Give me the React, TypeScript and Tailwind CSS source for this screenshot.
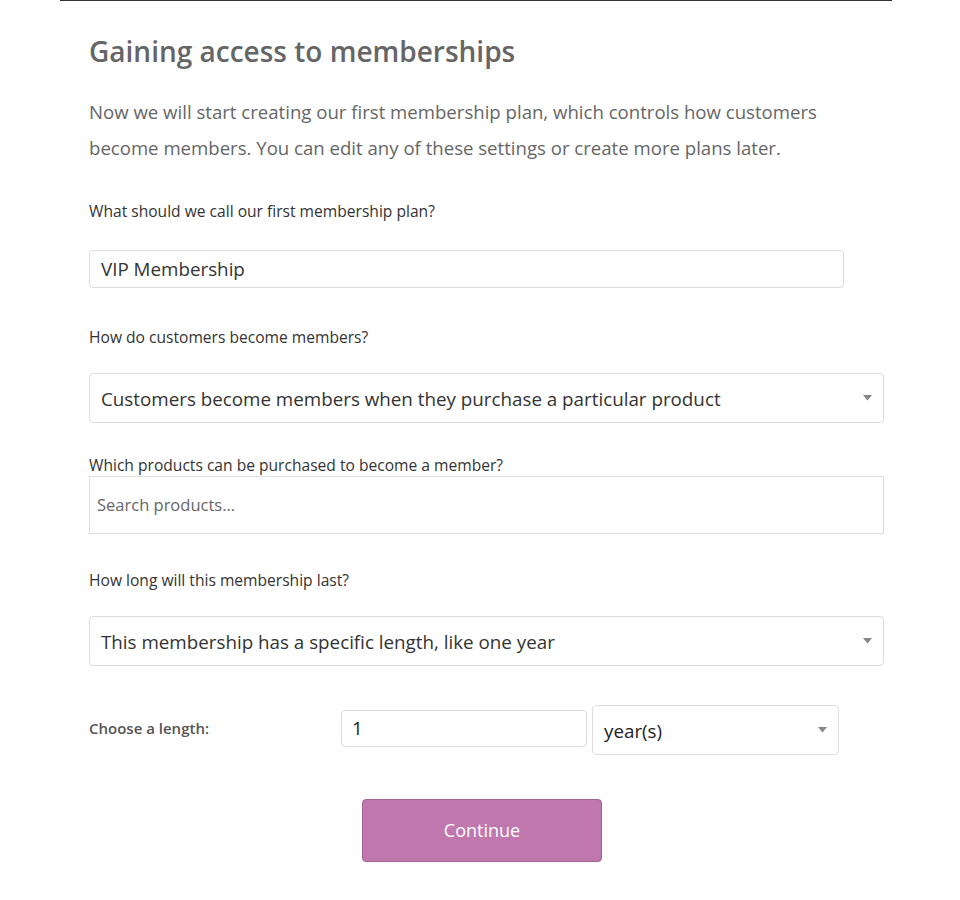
import React from "react";

const Arrow = () => (
  <svg width="9" height="6" viewBox="0 0 9 6" className="shrink-0">
    <path d="M0 0 H9 L4.5 5.5 Z" fill="#888" />
  </svg>
);

export default function App() {
  const font = { fontFamily: '"Open Sans", "Noto Sans", sans-serif' };
  return (
    <div className="bg-white min-h-[900px] w-[960px]" style={font}>
      <div className="ml-[60px] w-[832px] border-t border-[#333] pl-[29px] pr-[8px]">
        <h1 className="text-[28px] font-semibold text-[#666] mt-[30px] leading-[40px]">
          Gaining access to memberships
        </h1>
        <p className="text-[18.6px] text-[#666] leading-[36px] mt-[23px] w-[760px]">
          Now we will start creating our first membership plan, which controls how customers become members. You can edit any of these settings or create more plans later.
        </p>

        <div className="mt-[35px] text-[15.6px] text-[#333] leading-[20px]">What should we call our first membership plan?</div>
        <div className="mt-[29px] w-[755px] h-[38px] border border-[#ddd] rounded-[4px] flex items-center px-[11px] text-[18.8px] text-[#333]">
          <span className="mt-[1px]">VIP Membership</span>
        </div>

        <div className="mt-[39px] text-[15.6px] text-[#333] leading-[20px]">How do customers become members?</div>
        <div className="mt-[26px] w-[795px] h-[50px] border border-[#ddd] rounded-[4px] flex items-center justify-between pl-[11px] pr-[11px] text-[18.8px] text-[#333]">
          <span className="mt-[3px]">Customers become members when they purchase a particular product</span>
          <Arrow />
        </div>

        <div className="mt-[32px] text-[15.6px] text-[#333] leading-[20px]">Which products can be purchased to become a member?</div>
        <div className="mt-[1px] w-[795px] h-[58px] border border-[#ddd] flex items-center px-[7px] text-[16.5px] text-[#666]">
          Search products...
        </div>

        <div className="mt-[36px] text-[15.6px] text-[#333] leading-[20px]">How long will this membership last?</div>
        <div className="mt-[26px] w-[795px] h-[50px] border border-[#ddd] rounded-[4px] flex items-center justify-between pl-[11px] pr-[11px] text-[18.8px] text-[#333]">
          <span className="mt-[3px]">This membership has a specific length, like one year</span>
          <Arrow />
        </div>

        <div className="mt-[39px] flex items-start h-[50px]">
          <div className="w-[252px] mt-[13px] text-[15px] leading-[20px] font-semibold text-[#555]">Choose a length:</div>
          <div className="w-[246px] mt-[5px] h-[37px] border border-[#ddd] rounded-[4px] flex items-center px-[10px] text-[18.8px] text-[#222]">
            1
          </div>
          <div className="ml-[5px] w-[247px] h-[50px] border border-[#ddd] rounded-[4px] flex items-center justify-between pl-[11px] pr-[11px] text-[18.8px] text-[#222]">
            <span className="mt-[3px]">year(s)</span>
            <Arrow />
          </div>
        </div>

        <div className="mt-[44px] flex">
          <button className="ml-[273px] w-[240px] h-[63px] bg-[#bf77ad] border border-[#a46497] rounded-[4px] text-white text-[18px]">
            Continue
          </button>
        </div>
      </div>
    </div>
  );
}
